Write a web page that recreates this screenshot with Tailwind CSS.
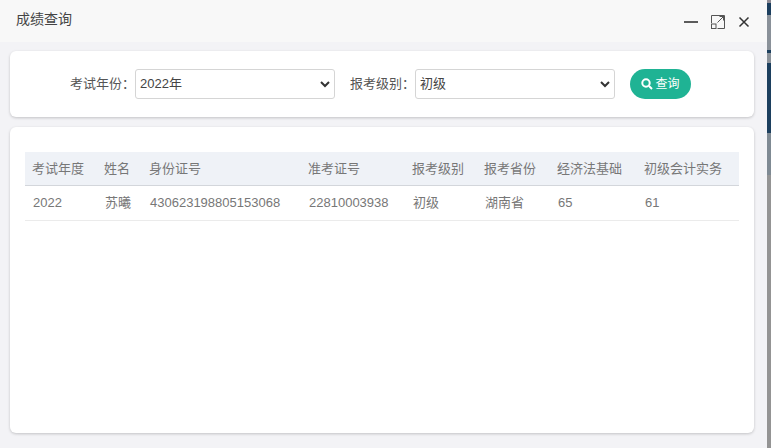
<!DOCTYPE html>
<html lang="zh">
<head>
    <meta charset="utf-8">
    <title>成绩查询</title>
    <script src="https://cdn.jsdelivr.net/npm/@tailwindcss/browser@4"></script>
</head>
<body class="w-[771px] h-[448px] overflow-hidden flex bg-[#949494] font-['Liberation_Sans','Noto_Sans_CJK_SC',sans-serif] text-[13px] text-[#555]">
    <div class="w-[767px] h-full flex flex-col bg-[#f3f3f6]">
        <div class="h-[42px] shrink-0 bg-[#f8f8f8] flex items-center justify-between pl-[16px] pr-[15px]">
            <span class="text-[14px] text-[#444] -mt-[3px]">成绩查询</span>
            <div class="flex items-center gap-[13px] mt-[1px]">
                <svg width="14" height="14" viewBox="0 0 14 14"><path d="M0 7h14" stroke="#333" stroke-width="1.600" fill="none"/></svg>
                <svg width="14" height="14" viewBox="0 0 14 14" fill="none" stroke="#555" stroke-width="1"><path d="M.5 8V.5h13v13H6.500"/><rect x=".5" y="9" width="4.500" height="4.500"/><path d="M6.500 7.500L13 1M8.500 1.500H12.500V5.500"/></svg>
                <svg width="14" height="14" viewBox="0 0 14 14"><path d="M1.500 2.500l9 9M10.500 2.500l-9 9" stroke="#333" stroke-width="1.500" fill="none"/></svg>
            </div>
        </div>
        <div class="ml-[10px] mr-[13px] mt-[9px] h-[66px] shrink-0 bg-white rounded-[6px] shadow-[0_1px_3px_rgba(0,0,0,0.2)] flex items-center pl-[60px]">
            <label class="w-[65px] shrink-0">考试年份：</label>
            <div class="relative w-[200px] h-[30px] mr-[15px]">
                <select class="appearance-none w-full h-full pl-[4px] bg-white border border-[#d5d5d5] rounded-[3px] text-[#444] text-[13px]">
                    <option>2022年</option>
                </select>
                <svg class="absolute right-[5px] top-[12px]" width="10" height="7" viewBox="0 0 10 7" fill="none" stroke="#333" stroke-width="2"><path d="M1 1l4 4 4-4"/></svg>
            </div>
            <label class="w-[65px] shrink-0">报考级别：</label>
            <div class="relative w-[200px] h-[30px] mr-[15px]">
                <select class="appearance-none w-full h-full pl-[4px] bg-white border border-[#d5d5d5] rounded-[3px] text-[#444] text-[13px]">
                    <option>初级</option>
                </select>
                <svg class="absolute right-[5px] top-[12px]" width="10" height="7" viewBox="0 0 10 7" fill="none" stroke="#333" stroke-width="2"><path d="M1 1l4 4 4-4"/></svg>
            </div>
            <button class="w-[61px] h-[30px] rounded-full bg-[#1fb394] text-white text-[12px] flex items-center justify-center gap-[2px]">
                <svg width="12" height="12" viewBox="0 0 12 12" fill="none" stroke="#fff" stroke-width="2"><circle cx="5" cy="5" r="3.700"/><path d="M8 8l3 3"/></svg>
                查询
            </button>
        </div>
        <div class="ml-[10px] mr-[13px] mt-[10px] mb-[15px] flex-1 bg-white rounded-[6px] shadow-[0_1px_3px_rgba(0,0,0,0.2)] pt-[25px] px-[15px]">
            <table class="w-[714px] table-fixed border-collapse text-left">
                <thead>
                    <tr class="h-[33px] bg-[#eff2f7] border-b border-[#d3d6db] text-[#777]">
                        <th class="w-[72px] pl-[7px] font-normal">考试年度</th>
                        <th class="w-[45px] pl-[7px] font-normal">姓名</th>
                        <th class="w-[159px] pl-[7px] font-normal">身份证号</th>
                        <th class="w-[104px] pl-[7px] font-normal">准考证号</th>
                        <th class="w-[72px] pl-[7px] font-normal">报考级别</th>
                        <th class="w-[73px] pl-[7px] font-normal">报考省份</th>
                        <th class="w-[87px] pl-[7px] font-normal">经济法基础</th>
                        <th class="pl-[7px] font-normal">初级会计实务</th>
                    </tr>
                </thead>
                <tbody>
                    <tr class="h-[35px] border-b border-[#ebebeb] text-[#777]">
                        <td class="pl-[8px]">2022</td>
                        <td class="pl-[8px]">苏曦</td>
                        <td class="pl-[8px]">430623198805153068</td>
                        <td class="pl-[8px]">22810003938</td>
                        <td class="pl-[8px]">初级</td>
                        <td class="pl-[8px]">湖南省</td>
                        <td class="pl-[8px]">65</td>
                        <td class="pl-[8px]">61</td>
                    </tr>
                </tbody>
            </table>
        </div>
    </div>
    <div class="w-[4px] h-full flex flex-col">
        <div class="h-[3px] bg-[#8d8a94]"></div>
        <div class="h-[12px] bg-[#1c3f5e]"></div>
        <div class="h-[35px] bg-[#8a9199]"></div>
        <div class="h-[3px] bg-[#1c3f5e]"></div>
        <div class="h-[10px] bg-[#8a9199]"></div>
        <div class="h-[70px] bg-[#1c3f5e]"></div>
        <div class="h-[42px] bg-[#7f8a93]"></div>
    </div>
</body>
</html>
